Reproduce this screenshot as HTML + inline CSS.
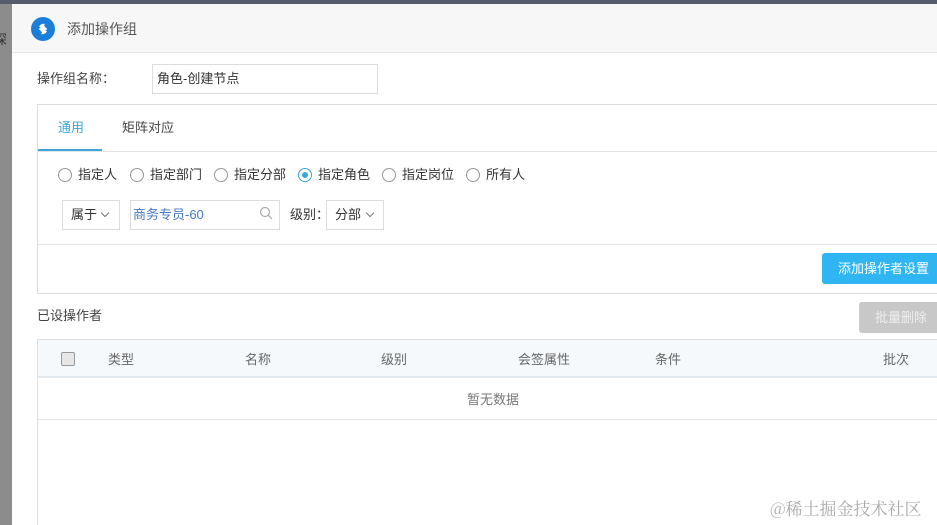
<!DOCTYPE html>
<html><head><meta charset="utf-8"><style>
*{margin:0;padding:0;box-sizing:border-box}
html,body{width:937px;height:525px;overflow:hidden}
body{position:relative;background:#fff;font-family:"Liberation Sans","Noto Sans CJK SC",sans-serif;font-size:13px;color:#333}
.a{position:absolute}
.t{position:absolute;white-space:nowrap;line-height:16px}
.rad{position:absolute;width:14px;height:14px;border:1px solid #999;border-radius:50%;background:#fff}
.box{position:absolute;border:1px solid #ddd;background:#fff}
.chev{position:absolute;width:6px;height:6px;border-right:1.3px solid #777;border-bottom:1.3px solid #777;transform:rotate(45deg)}
</style></head><body>
<div class="a" style="left:0;top:0;width:12px;height:525px;background:#8c8c8c"></div>
<div class="t" style="left:-6px;top:32px;color:#333;font-size:13px">深</div>
<div class="a" style="left:0;top:0;width:937px;height:4px;background:#555d6a"></div>
<div class="a" style="left:12px;top:4px;width:925px;height:521px;background:#fff"></div>
<div class="a" style="left:12px;top:4px;width:925px;height:49px;background:#f7f7f7;border-bottom:1px solid #e6e6e6"></div>
<div class="a" style="left:31px;top:17px;width:24px;height:24px;border-radius:50%;background:#1b7fd9"></div>
<svg class="a" style="left:31px;top:17px" width="24" height="24" viewBox="0 0 24 24"><path d="M8 10 Q10 6 14 7 L12 10 Z M16 14 Q14 18 10 17 L12 14 Z" fill="#fff"/><rect x="9" y="9" width="6" height="6" fill="#fff" transform="rotate(45 12 12)"/></svg>
<div class="t" style="left:67px;top:21px;font-size:14px;color:#555">添加操作组</div>
<div class="t" style="left:37px;top:71px;color:#444">操作组名称：</div>
<div class="box" style="left:152px;top:64px;width:226px;height:30px"></div>
<div class="t" style="left:157px;top:71px;color:#333">角色-创建节点</div>
<div class="box" style="left:37px;top:104px;width:910px;height:190px"></div>
<div class="a" style="left:38px;top:151px;width:900px;height:1px;background:#e4e4e4"></div>
<div class="t" style="left:58px;top:120px;color:#3aa6dc">通用</div>
<div class="a" style="left:38px;top:149px;width:64px;height:2px;background:#3aa6dc"></div>
<div class="t" style="left:122px;top:120px;color:#444">矩阵对应</div>
<div class="rad" style="left:58px;top:168px"></div><div class="t" style="left:78px;top:167px">指定人</div>
<div class="rad" style="left:130px;top:168px"></div><div class="t" style="left:150px;top:167px">指定部门</div>
<div class="rad" style="left:214px;top:168px"></div><div class="t" style="left:234px;top:167px">指定分部</div>
<div class="rad" style="left:298px;top:168px;border-color:#3aa6dc"></div><div class="a" style="left:302px;top:172px;width:6px;height:6px;border-radius:50%;background:#3aa6dc"></div><div class="t" style="left:318px;top:167px">指定角色</div>
<div class="rad" style="left:382px;top:168px"></div><div class="t" style="left:402px;top:167px">指定岗位</div>
<div class="rad" style="left:466px;top:168px"></div><div class="t" style="left:486px;top:167px">所有人</div>
<div class="box" style="left:62px;top:200px;width:58px;height:30px"></div>
<div class="t" style="left:71px;top:207px">属于</div><div class="chev" style="left:102px;top:210px"></div>
<div class="box" style="left:130px;top:200px;width:150px;height:30px"></div>
<div class="t" style="left:133px;top:207px;color:#4a78c0">商务专员-60</div>
<svg class="a" style="left:259px;top:206px" width="14" height="14" viewBox="0 0 14 14"><circle cx="6" cy="6" r="4.5" fill="none" stroke="#aaa" stroke-width="1.2"/><path d="M9.3 9.3 L13 13" stroke="#aaa" stroke-width="1.2"/></svg>
<div class="t" style="left:290px;top:207px">级别：</div>
<div class="box" style="left:326px;top:200px;width:58px;height:30px"></div>
<div class="t" style="left:335px;top:207px">分部</div><div class="chev" style="left:367px;top:210px"></div>
<div class="a" style="left:38px;top:244px;width:900px;height:1px;background:#e4e4e4"></div>
<div class="a" style="left:822px;top:253px;width:120px;height:31px;background:#2fb5f2;border-radius:3px"></div>
<div class="t" style="left:838px;top:261px;color:#fff">添加操作者设置</div>
<div class="t" style="left:37px;top:308px;color:#444">已设操作者</div>
<div class="a" style="left:859px;top:302px;width:85px;height:31px;background:#c8c8c8;border-radius:3px"></div>
<div class="t" style="left:875px;top:310px;color:#eee">批量删除</div>
<div class="a" style="left:37px;top:339px;width:910px;height:186px;border:1px solid #e0e0e0;border-bottom:none"></div>
<div class="a" style="left:38px;top:340px;width:900px;height:38px;background:#f5f9fc;border-bottom:2px solid #e3e8ec"></div>
<div class="a" style="left:61px;top:352px;width:14px;height:14px;border:1px solid #999;border-radius:2px;background:#e6e6e6"></div>
<div class="t" style="left:108px;top:352px;color:#666">类型</div>
<div class="t" style="left:245px;top:352px;color:#666">名称</div>
<div class="t" style="left:381px;top:352px;color:#666">级别</div>
<div class="t" style="left:518px;top:352px;color:#666">会签属性</div>
<div class="t" style="left:655px;top:352px;color:#666">条件</div>
<div class="t" style="left:883px;top:352px;color:#666">批次</div>
<div class="t" style="left:467px;top:392px;color:#777">暂无数据</div>
<div class="a" style="left:38px;top:419px;width:900px;height:1px;background:#e4e4e4"></div>
<div class="t" style="left:770px;top:498px;font-size:17px;line-height:20px;color:#aaa;font-family:'Noto Serif CJK SC','Liberation Serif',serif">@稀土掘金技术社区</div>
</body></html>
